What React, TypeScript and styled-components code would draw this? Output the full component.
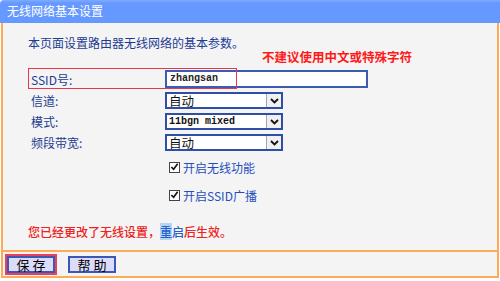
import React from 'react';
import styled, { createGlobalStyle } from 'styled-components';

const Global = createGlobalStyle`
  html, body { margin: 0; padding: 0; background: #fff; }
  body {
    font-family: "Noto Sans CJK SC", "Liberation Sans", sans-serif;
    font-size: 12px;
  }
`;

const CJK = `"Noto Sans CJK SC", "Liberation Sans", sans-serif`;
const MONO = `"Liberation Mono", "Noto Sans CJK SC", monospace`;

const Frame = styled.div`
  width: 500px;
  height: 281px;
  display: flex;
  flex-direction: column;
`;

const Header = styled.div`
  height: 23px;
  box-sizing: border-box;
  background: linear-gradient(#80aaff 0, #6699ff 3px, #6699ff 100%);
  border-top-left-radius: 4px;
  color: #fff;
  font-family: ${CJK};
  font-size: 12px;
  line-height: 22px;
  padding-left: 7px;
`;

const Panel = styled.div`
  margin: 0 1px;
  border: 2px solid #ffaa55;
  border-top: none;
  background: #f4f4f4;
  display: flex;
  flex-direction: column;
`;

const Body = styled.div`
  height: 229px;
  box-sizing: border-box;
  padding: 13px 0 0 25px;
  display: flex;
  flex-direction: column;
  border-bottom: 2px solid #ffaa55;
`;

const Intro = styled.div`
  color: #1c3b93;
  line-height: 14px;
  font-size: 12px;
`;

const Hint = styled.div`
  color: #ff1a1a;
  font-weight: 700;
  font-size: 12.5px;
  line-height: 14px;
  padding-left: 234px;
`;

const Form = styled.div`
  display: flex;
  flex-direction: column;
  margin-top: 4px;
`;

const Row = styled.div<{ $h: number }>`
  position: relative;
  height: ${p => p.$h}px;
  display: flex;
  align-items: center;
`;

const Label = styled.div`
  width: 134px;
  padding-left: 3px;
  color: #1c3b93;
  font-size: 12px;
`;

const Mark = styled.div`
  position: absolute;
  left: 0;
  top: 0;
  width: 209px;
  height: 21px;
  box-sizing: border-box;
  border: 1.5px solid #e8374a;
  pointer-events: none;
`;

const TextInput = styled.div`
  width: 203px;
  height: 18px;
  box-sizing: border-box;
  border: 2px solid #3c5cb4;
  background: #fff;
  padding-left: 3px;
  font-family: ${MONO};
  font-weight: 700;
  font-size: 10px;
  line-height: 14px;
  color: #222;
`;

const Select = styled.div`
  width: 118px;
  height: 17px;
  box-sizing: border-box;
  border: 2px solid #2f4ea8;
  background: #fff;
  display: flex;
  align-items: stretch;
`;

const SelectValue = styled.div<{ $mono?: boolean }>`
  flex: 1;
  padding-left: 2px;
  font-family: ${p => (p.$mono ? MONO : CJK)};
  font-size: ${p => (p.$mono ? '10px' : '12.5px')};
  font-weight: ${p => (p.$mono ? 700 : 400)};
  line-height: 13px;
  color: #111;
`;

const Arrow = styled.div`
  width: 15px;
  box-sizing: border-box;
  border-left: 1px solid #9aa6c8;
  background: #f0f0f0;
  display: flex;
  align-items: center;
  justify-content: center;
`;

const CheckRow = styled.div`
  height: 28px;
  display: flex;
  align-items: center;
  padding-left: 141px;
  gap: 3px;
`;

const Box = styled.div`
  width: 11px;
  height: 11px;
  box-sizing: border-box;
  border: 1px solid #444;
  background: #fff;
  display: flex;
  align-items: center;
  justify-content: center;
`;

const CheckLabel = styled.span`
  color: #1f4fbf;
  font-size: 12px;
`;

const Notice = styled.div`
  margin-top: 16px;
  line-height: 14px;
  color: #ee2222;
  font-weight: 500;
  font-size: 12px;
`;

const Link = styled.span<{ $hl?: boolean }>`
  color: #1f5fd0;
  background: ${p => (p.$hl ? '#b8d4f4' : 'transparent')};
`;

const Footer = styled.div`
  height: 24px;
  display: flex;
  align-items: center;
  gap: 13px;
  padding-left: 4px;
`;

const Button = styled.button<{ $focus?: boolean }>`
  width: 48px;
  height: 17px;
  box-sizing: border-box;
  padding: 0;
  border: 2px solid #3c57b5;
  background: #dcdcfa;
  font-family: ${CJK};
  font-size: 13px;
  line-height: 13px;
  color: #000;
  letter-spacing: 0;
  outline: ${p => (p.$focus ? '2px solid #e8405a' : 'none')};
  outline-offset: 0;
`;

const Chevron = () => (
  <svg width="9" height="6" viewBox="0 0 9 6">
    <path d="M1 1 L4.5 4.5 L8 1" fill="none" stroke="#111" strokeWidth="1.8" />
  </svg>
);

const Tick = () => (
  <svg width="10" height="10" viewBox="0 0 10 10">
    <path d="M1.5 5 L4 7.5 L8.5 1.5" fill="none" stroke="#111" strokeWidth="1.8" />
  </svg>
);

const Dropdown = ({ value, mono }: { value: string; mono?: boolean }) => (
  <Select>
    <SelectValue $mono={mono}>{value}</SelectValue>
    <Arrow>
      <Chevron />
    </Arrow>
  </Select>
);

export default function App() {
  return (
    <>
      <Global />
      <Frame>
        <Header>无线网络基本设置</Header>
        <Panel>
          <Body>
            <Intro>本页面设置路由器无线网络的基本参数。</Intro>
            <Hint>不建议使用中文或特殊字符</Hint>
            <Form>
              <Row $h={22}>
                <Mark />
                <Label>SSID号:</Label>
                <TextInput>zhangsan</TextInput>
              </Row>
              <Row $h={21}>
                <Label>信道:</Label>
                <Dropdown value="自动" />
              </Row>
              <Row $h={21}>
                <Label>模式:</Label>
                <Dropdown value="11bgn mixed" mono />
              </Row>
              <Row $h={21}>
                <Label>频段带宽:</Label>
                <Dropdown value="自动" />
              </Row>
              <CheckRow>
                <Box>
                  <Tick />
                </Box>
                <CheckLabel>开启无线功能</CheckLabel>
              </CheckRow>
              <CheckRow>
                <Box>
                  <Tick />
                </Box>
                <CheckLabel>开启SSID广播</CheckLabel>
              </CheckRow>
            </Form>
            <Notice>
              您已经更改了无线设置，<Link $hl>重</Link>
              <Link>启</Link>后生效。
            </Notice>
          </Body>
          <Footer>
            <Button $focus>保 存</Button>
            <Button>帮 助</Button>
          </Footer>
        </Panel>
      </Frame>
    </>
  );
}
